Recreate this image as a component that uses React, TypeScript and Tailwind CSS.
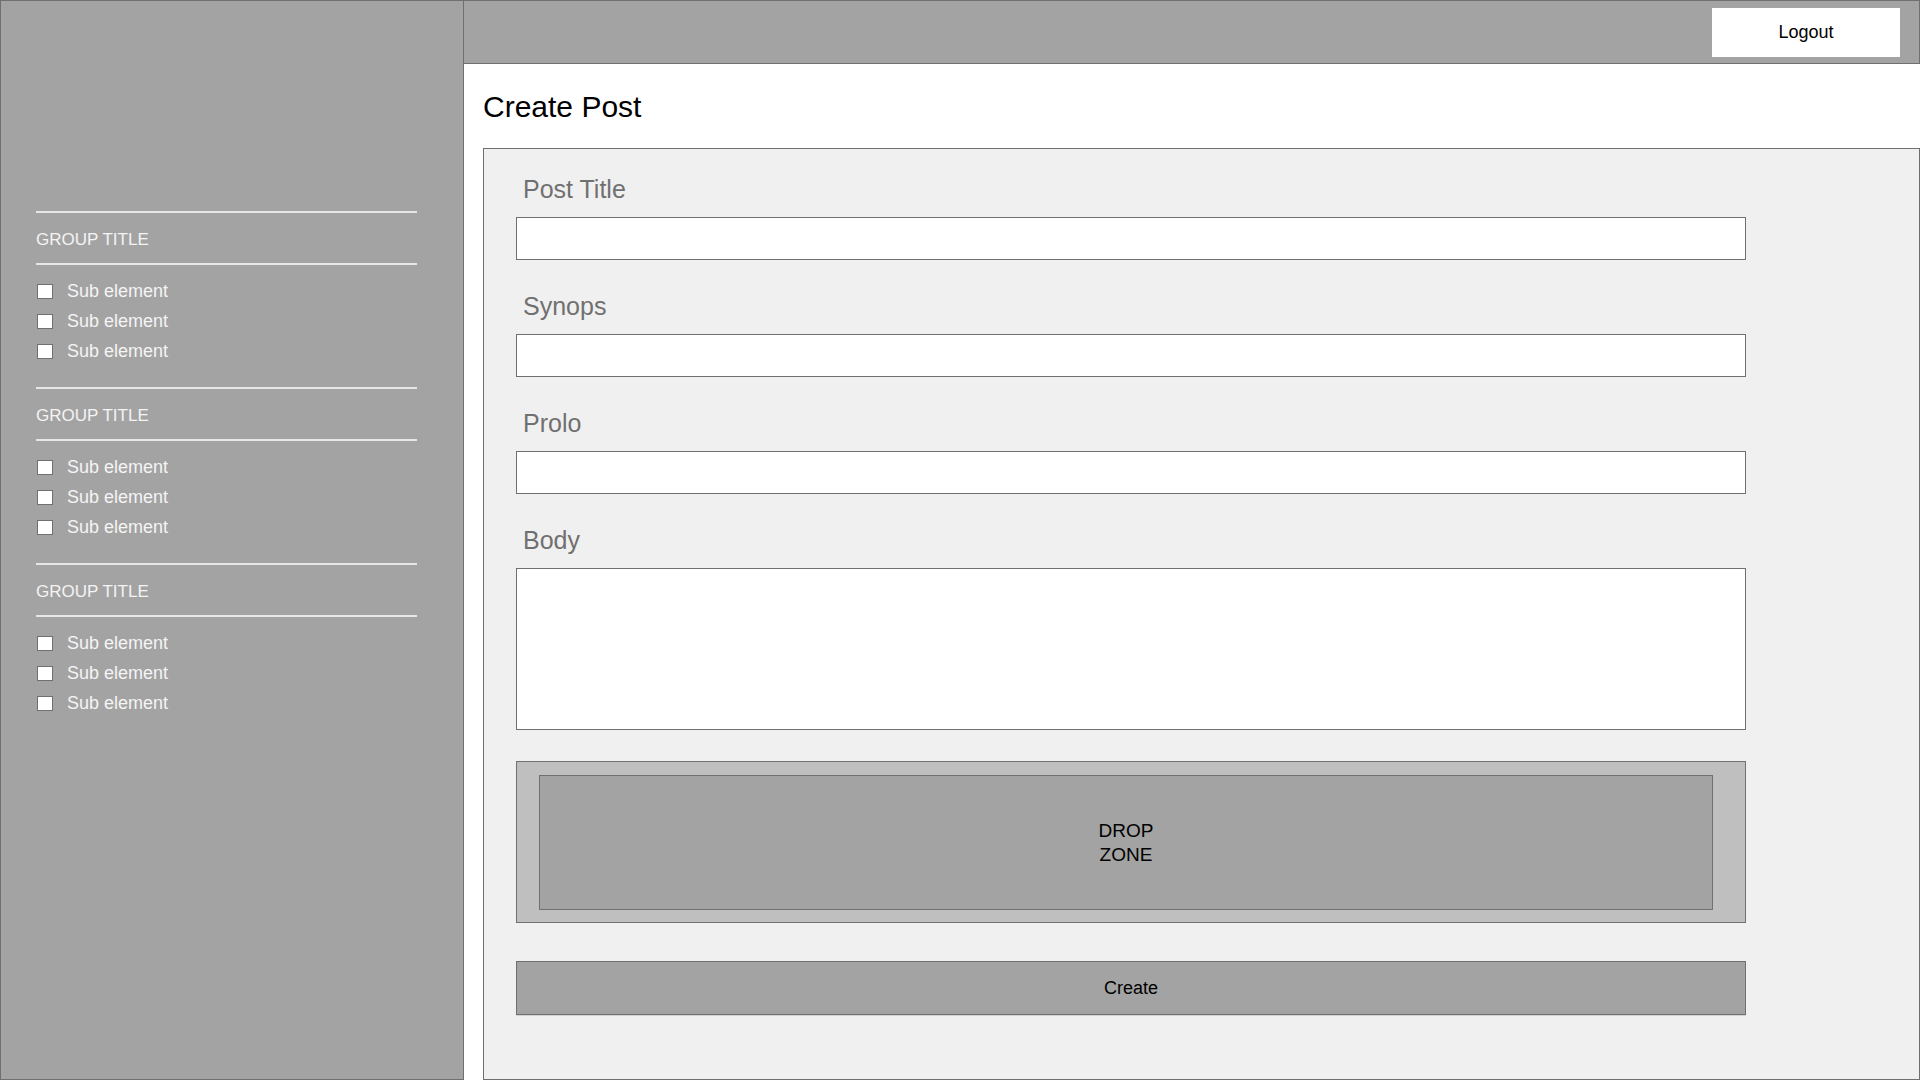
import React from 'react';

const groups = ['GROUP TITLE', 'GROUP TITLE', 'GROUP TITLE'];
const items = ['Sub element', 'Sub element', 'Sub element'];

const SideGroup: React.FC<{ title: string }> = ({ title }) => {
  return (
    <div className="border-t-2 border-[#e6e6e6] pb-[21px]">
      <div className="h-[52px] pt-[17px] text-[17px] leading-[20px] text-[#f4f4f4] border-b-2 border-[#e6e6e6]">
        {title}
      </div>
      <div className="pt-[11px]">
        {items.map((item, i) => (
          <label key={i} className="flex items-center h-[30px] gap-[14px] pl-px">
            <span className="w-4 h-[15px] bg-white border border-[#707070]"></span>
            <span className="text-[18px] leading-[30px] text-[#f4f4f4]">{item}</span>
          </label>
        ))}
      </div>
    </div>
  );
};

const Field: React.FC<{ label: string; tall?: boolean }> = ({ label, tall }) => {
  return (
    <div className="mb-[31px]">
      <div className="ml-[39px] text-[25px] leading-[30px] text-[#707070] mb-[13px]">{label}</div>
      {tall ? (
        <textarea className="block ml-[32px] w-[1230px] h-[162px] bg-white border border-[#707070] resize-none outline-none"></textarea>
      ) : (
        <input type="text" className="block ml-[32px] w-[1230px] h-[43px] bg-white border border-[#707070] outline-none" />
      )}
    </div>
  );
};

export default function App() {
  return (
    <div className="flex h-screen w-full overflow-hidden bg-white font-['Liberation_Sans',Arial,sans-serif]">
      <aside className="w-[464px] shrink-0 h-full bg-[#a3a3a3] border border-[#707070] pl-[35px] pt-[210px]">
        <div className="w-[381px]">
          {groups.map((g, i) => (
            <SideGroup key={i} title={g} />
          ))}
        </div>
      </aside>

      <main className="flex-1 flex flex-col h-full min-w-0">
        <header className="h-[64px] shrink-0 bg-[#a3a3a3] border border-l-0 border-[#707070] flex items-center justify-end pr-[19px]">
          <button className="w-[188px] h-[49px] bg-white text-black text-[18px]">Logout</button>
        </header>

        <div className="flex-1 flex flex-col pl-[19px] min-h-0">
          <h1 className="pt-[25px] mb-[23px] text-[30px] leading-[36px] text-black">Create Post</h1>

          <section className="flex-1 bg-[#f0f0f0] border border-[#707070] pt-[25px]">
            <Field label="Post Title" />
            <Field label="Synops" />
            <Field label="Prolo" />
            <Field label="Body" tall />

            <div className="ml-[32px] w-[1230px] h-[162px] bg-[#bfbfbf] border border-[#707070] pt-[13px] pl-[22px] pr-[32px]">
              <div className="h-[135px] bg-[#a3a3a3] border border-[#707070] flex items-center justify-center">
                <div className="text-[19px] leading-[24px] text-black text-center">
                  DROP
                  <br />
                  ZONE
                </div>
              </div>
            </div>

            <button className="block mt-[38px] ml-[32px] w-[1230px] h-[54px] bg-[#a3a3a3] border border-[#707070] text-[18px] text-black shadow-[0_1px_0_#d2d2d2]">
              Create
            </button>
          </section>
        </div>
      </main>
    </div>
  );
}
